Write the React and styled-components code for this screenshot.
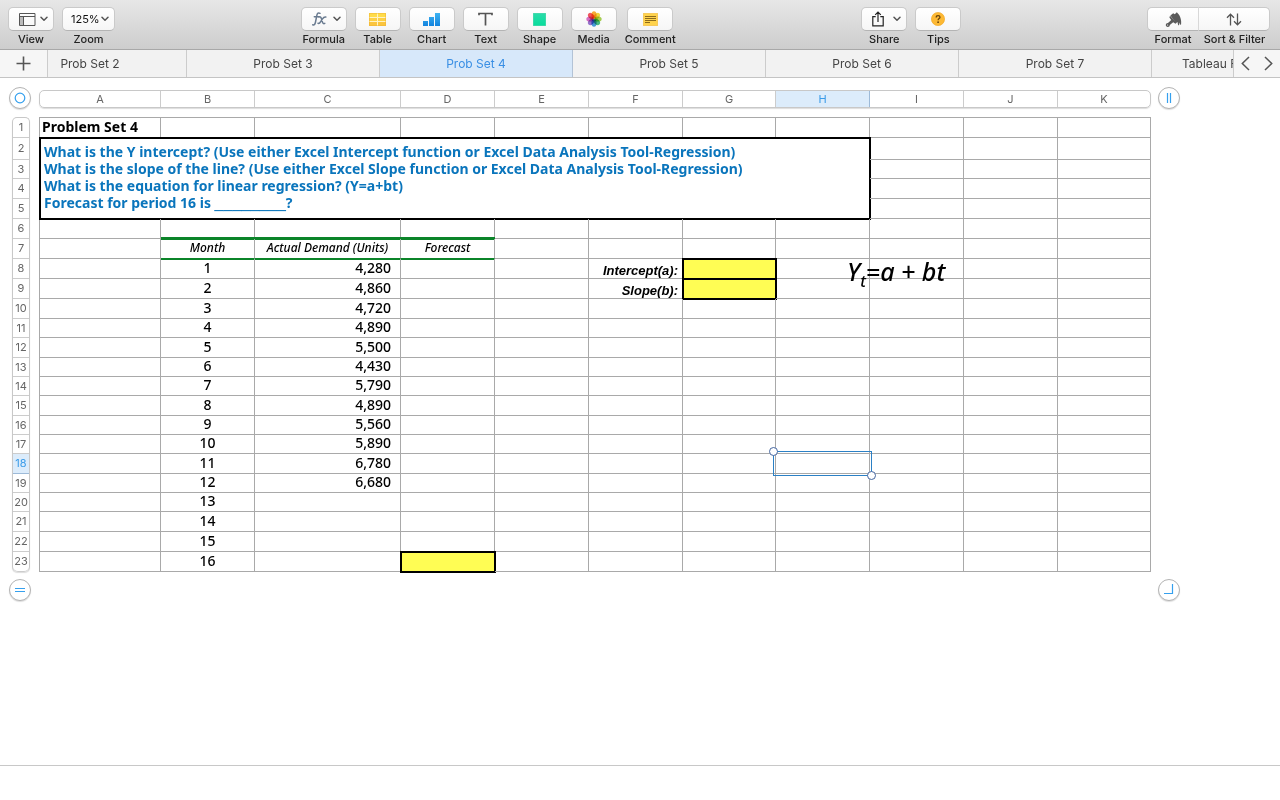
import React from 'react';
import styled, { createGlobalStyle, css } from 'styled-components';

const columns = [
    { name: 'A', width: 121 },
    { name: 'B', width: 94 },
    { name: 'C', width: 146 },
    { name: 'D', width: 94 },
    { name: 'E', width: 94 },
    { name: 'F', width: 94 },
    { name: 'G', width: 93 },
    { name: 'H', width: 94 },
    { name: 'I', width: 94 },
    { name: 'J', width: 94 },
    { name: 'K', width: 93 },
];

const rowHeights = [20, 22, 19, 20, 20, 20, 20, 20, 20, 20, 19, 20, 19, 19, 20, 19, 19, 20, 19, 19, 20, 20, 20];

const demand = ['4,280', '4,860', '4,720', '4,890', '5,500', '4,430', '5,790', '4,890', '5,560', '5,890', '6,780', '6,680'];

const tabs = ['Prob Set 2', 'Prob Set 3', 'Prob Set 4', 'Prob Set 5', 'Prob Set 6', 'Prob Set 7'];

const FIRST_MONTH_ROW = 8;

const cellProps = {
    A1: { $kind: 'title', text: 'Problem Set 4' },
    B7: { $kind: 'heading', text: 'Month' },
    C7: { $kind: 'heading', text: 'Actual Demand (Units)' },
    D7: { $kind: 'heading', text: 'Forecast' },
    F8: { $kind: 'label', text: 'Intercept(a):' },
    F9: { $kind: 'label', text: 'Slope(b):' },
    G8: { $kind: 'answer' },
    G9: { $kind: 'answer' },
    D23: { $kind: 'answer' },
};

const getCell = (column, row) => {
    const month = row - FIRST_MONTH_ROW + 1;
    if (column === 'B' && month > 0)
        return { $kind: 'month', text: month };
    if (column === 'C' && month > 0)
        return { $kind: 'number', text: demand[month - 1] };
    return cellProps[column + row] || {};
};

const Chevron = () => (
    <svg width="8" height="6" viewBox="0 0 8 6" fill="none" stroke="#555" strokeWidth="1.5" strokeLinecap="round" strokeLinejoin="round">
        <path d="M1 1.2l3 3 3-3" />
    </svg>
);

const ViewIcon = () => (
    <svg width="17" height="13" viewBox="0 0 17 13" fill="none" stroke="#555">
        <rect x="1" y="4" width="3.5" height="8.5" fill="#bbb" stroke="none" />
        <path d="M.5.5h15.500v12H.5zM.5 3.500h15.500M4.500 3.500v9" />
    </svg>
);

const FormulaIcon = () => (
    <svg width="15" height="14" viewBox="0 0 15 14" fill="none" stroke="#6a7b90" strokeWidth="1.500" strokeLinecap="round">
        <path d="M8 1.300C6.300.400 5.300 1.300 4.900 3.200L3.400 10.500C3 12.600 2 13.300.700 12.700M2.300 4.800h4.500" />
        <path d="M7 5c1.400-.6 2 .2 2.400 1.600l1 3.300c.4 1.500 1.200 2.100 2.400 1.500M13.800 5c-1.500-.3-2.500.6-3.500 2.100L8.700 9.600C7.900 11 7.200 11.700 6 11.300" />
    </svg>
);

const TableIcon = () => (
    <svg width="17" height="13" viewBox="0 0 17 13">
        <path fill="#ffdc4a" d="M0 0h17v4.500H0z" />
        <path fill="#fdd045" d="M0 4.500h17v4H0z" />
        <path fill="#fbc53e" d="M0 8.500h17V13H0z" />
        <path fill="none" stroke="#fff3c4" d="M0 4.500h17M0 8.500h17M8.500 0v13" />
        <path fill="none" stroke="#efb432" strokeWidth=".6" d="M.3.3h16.400v12.400H.3z" />
    </svg>
);

const ChartIcon = () => (
    <svg width="17" height="13" viewBox="0 0 17 13">
        <defs>
            <linearGradient id="bars" x1="0" y1="0" x2="0" y2="13" gradientUnits="userSpaceOnUse">
                <stop offset="0" stopColor="#3fb4f2" />
                <stop offset="1" stopColor="#1283de" />
            </linearGradient>
        </defs>
        <path fill="url(#bars)" d="M0 8h5v5H0zM6 4h5v9H6zM12 0h5v13h-5z" />
    </svg>
);

const TextIcon = () => (
    <svg width="15" height="14" viewBox="0 0 15 14" fill="none" stroke="#555" strokeWidth="1.700">
        <path d="M1 3.200V1.500h13v1.700M7.500 1.500v12" />
    </svg>
);

const ShapeIcon = () => (
    <svg width="13" height="13" viewBox="0 0 13 13">
        <defs>
            <linearGradient id="shape" x1="0" y1="0" x2="0" y2="1">
                <stop offset="0" stopColor="#2bdcaa" />
                <stop offset="1" stopColor="#08dd9c" />
            </linearGradient>
        </defs>
        <path fill="url(#shape)" stroke="#1ccb95" strokeWidth=".6" d="M.3.3h12.400v12.400H.3z" />
    </svg>
);

const petals = ['#f8a01c', '#f0d326', '#9ccb3b', '#2fb573', '#2c8fd6', '#8b62c9', '#d55ec0', '#f1404b'];

const MediaIcon = () => (
    <svg width="16" height="16" viewBox="0 0 16 16">
        {petals.map((color, index) => (
            <Petal key={color} cx="8" cy="4" rx="2.600" ry="3.700" fill={color} opacity=".88" transform={`rotate(${index * 45} 8 8)`} />
        ))}
    </svg>
);

const CommentIcon = () => (
    <svg width="15" height="13" viewBox="0 0 15 13">
        <path fill="#ffd34c" stroke="#efb432" strokeWidth=".6" d="M.3.3h14.400v12.400H.3z" />
        <path stroke="#8c6a1c" d="M2 3.500h11M2 5.500h11M2 7.500h11M2 9.500h5" />
    </svg>
);

const ShareIcon = () => (
    <svg width="12" height="16" viewBox="0 0 12 16" fill="none" stroke="#222" strokeWidth="1.200">
        <path d="M3.700 5.600H.8v9.300h10.400V5.600H8.300M6 11V1.200M3.200 3.800L6 1l2.800 2.800" />
    </svg>
);

const TipsIcon = () => (
    <svg width="14" height="14" viewBox="0 0 14 14">
        <circle cx="7" cy="7" r="6.600" fill="#fdb934" stroke="#f0a51f" strokeWidth=".6" />
        <path d="M5.200 5.500c0-1.100.8-1.800 1.900-1.800s1.900.6 1.900 1.600c0 1.300-1.900 1.300-1.900 2.900" fill="none" stroke="#66430b" strokeWidth="1.300" />
        <circle cx="7.100" cy="10.200" r=".9" fill="#66430b" />
    </svg>
);

const FormatIcon = () => (
    <svg width="17" height="15" viewBox="0 0 17 15" fill="#5a5a5a">
        <path d="M5.400 3.600L8.200 1.300l1.600.9L11.800.200l2 2.200c1.100 1.600 2 3.900 2.300 6.400.1 1.500.1 2.800-.1 4.100-.9-.3-1-1.400-1.300-2.500-.3 1-.3 2.600-1.200 3-.8-.7-.5-2.300-1.100-3.500L11 11z" />
        <path d="M5 3.800l6.700 6.900-1.200 1-2.300-1.500-3.400 2.700c.1 1.200-.8 2-2 2-1.300 0-2-.9-2-1.900 0-1.200 1-2 2.200-1.900l3.200-3.200-1.800-2.500z" />
        <circle cx="2.600" cy="13" r=".6" fill="#fafafa" />
    </svg>
);

const SortIcon = () => (
    <svg width="16" height="13" viewBox="0 0 16 13" fill="none" stroke="#555" strokeWidth="1.300">
        <path d="M4.500 12.500V1.200M1 4.700l3.500-3.500L8 4.700M11.500.500v11.300M8 8.300l3.500 3.500L15 8.300" />
    </svg>
);

const insertTools = [
    { label: 'Formula', icon: <FormulaIcon />, menu: true },
    { label: 'Table', icon: <TableIcon /> },
    { label: 'Chart', icon: <ChartIcon /> },
    { label: 'Text', icon: <TextIcon /> },
    { label: 'Shape', icon: <ShapeIcon /> },
    { label: 'Media', icon: <MediaIcon /> },
    { label: 'Comment', icon: <CommentIcon /> },
];

const ToolButton = ({ label, icon, menu, width, side }) => (
    <Tool>
        <Button aria-label={label} $menu={menu} $width={width} $side={side}>
            {icon}
            {menu && <Chevron />}
        </Button>
        <ToolLabel>{label}</ToolLabel>
    </Tool>
);

const Cell = ({ column, row }) => {
    const { text, ...style } = getCell(column, row);
    return (
        <Td {...style}>
            {text}
            {column === 'H' && row === 8 && <Equation>Y<sub>t</sub>=a + bt</Equation>}
            {column === 'H' && row === 18 && <Selection />}
        </Td>
    );
};

const Sheet = () => (
    <Table>
        <colgroup>
            {columns.map(({ name, width }) => <Col key={name} $width={width} />)}
        </colgroup>
        <tbody>
            {rowHeights.map((height, index) => {
                const row = index + 1;
                const merged = row >= 2 && row <= 5;
                return (
                    <Tr key={row} $height={height}>
                        {row === 2 &&
                            <Td colSpan={8} rowSpan={4} $kind="question">
                                What is the Y intercept? (Use either Excel Intercept function or Excel Data Analysis Tool-Regression)<br />
                                What is the slope of the line? (Use either Excel Slope function or Excel Data Analysis Tool-Regression)<br />
                                What is the equation for linear regression? (Y=a+bt)<br />
                                Forecast for period 16 is <Blank>________</Blank>?
                            </Td>
                        }
                        {(merged ? columns.slice(8) : columns).map(({ name }) => <Cell key={name} column={name} row={row} />)}
                    </Tr>
                );
            })}
        </tbody>
    </Table>
);

const App = () => (
    <Page>
        <GlobalStyle />
        <Toolbar>
            <Group>
                <ToolButton label="View" icon={<ViewIcon />} menu />
                <Tool>
                    <ZoomBox>
                        <select id="zoom" defaultValue="125%">
                            <option>100%</option>
                            <option>125%</option>
                            <option>150%</option>
                        </select>
                        <Chevron />
                    </ZoomBox>
                    <ToolLabel as="label" htmlFor="zoom">Zoom</ToolLabel>
                </Tool>
            </Group>
            <Group>
                {insertTools.map((tool) => <ToolButton key={tool.label} {...tool} />)}
            </Group>
            <Group>
                <ToolButton label="Share" icon={<ShareIcon />} menu />
                <ToolButton label="Tips" icon={<TipsIcon />} />
            </Group>
            <Group $joined>
                <ToolButton label="Format" icon={<FormatIcon />} width={52} side="left" />
                <ToolButton label="Sort & Filter" icon={<SortIcon />} width={71} side="right" />
            </Group>
        </Toolbar>
        <TabBar>
            <AddButton aria-label="Add sheet">
                <svg width="15" height="15" viewBox="0 0 15 15" stroke="#555" strokeWidth="1.600"><path d="M7.500.500v14M.500 7.500h14" /></svg>
            </AddButton>
            <TabWindow>
                <TabTrack>
                    {tabs.map((tab) => <Tab key={tab} $active={tab === 'Prob Set 4'}>{tab}</Tab>)}
                    <Tab $start>Tableau F</Tab>
                </TabTrack>
            </TabWindow>
            <TabArrows>
                <button aria-label="Previous sheets">
                    <svg width="9" height="15" viewBox="0 0 9 15" fill="none" stroke="#555" strokeWidth="1.500"><path d="M8 1L1.300 7.500 8 14" /></svg>
                </button>
                <button aria-label="Next sheets">
                    <svg width="9" height="15" viewBox="0 0 9 15" fill="none" stroke="#555" strokeWidth="1.500"><path d="M1 1l6.700 6.500L1 14" /></svg>
                </button>
            </TabArrows>
        </TabBar>
        <Canvas>
            <Handle aria-label="Select table">
                <svg width="12" height="12" viewBox="0 0 12 12"><circle cx="6" cy="6" r="4.800" /></svg>
            </Handle>
            <ColumnHeads>
                {columns.map(({ name, width }) => <ColumnHead key={name} $width={width} $active={name === 'H'}>{name}</ColumnHead>)}
            </ColumnHeads>
            <Handle aria-label="Add column">
                <svg width="12" height="12" viewBox="0 0 12 12"><path d="M4.500 1v10M7.500 1v10" /></svg>
            </Handle>
            <RowHeads>
                {rowHeights.map((height, index) => <RowHead key={index} $height={height} $active={index === 17}>{index + 1}</RowHead>)}
            </RowHeads>
            <Sheet />
            <span />
            <Handle aria-label="Add row">
                <svg width="12" height="12" viewBox="0 0 12 12"><path d="M1 4.500h10M1 7.500h10" /></svg>
            </Handle>
            <span />
            <Handle aria-label="Add rows and columns">
                <svg width="12" height="12" viewBox="0 0 12 12"><path d="M1 9.500h8.500V0" /></svg>
            </Handle>
        </Canvas>
        <Footer />
    </Page>
);

export default App;

const uiFont = 'Inter, "Liberation Sans", sans-serif';
const sheetFont = '"Noto Sans", "Open Sans", sans-serif';

const GlobalStyle = createGlobalStyle`
    *{
        box-sizing:border-box;
    }
    body{
        margin:0;
        background:#fff;
        font-family:${uiFont};
    }
    button, select{
        font:inherit;
        margin:0;
        padding:0;
        border:0;
        background:none;
    }
    svg{
        display:block;
        flex:none;
    }
`;

const Page = styled.div`
    display:flex;
    flex-direction:column;
    min-height:100vh;
`;

const Toolbar = styled.header`
    display:flex;
    justify-content:space-between;
    height:50px;
    padding:7px 10px 0 8px;
    background:linear-gradient(#e7e7e7, #cdcdcd);
    border-bottom:1px solid #a8a8a8;
`;

const Group = styled.div`
    display:flex;
    gap:${({ $joined }) => $joined ? 0 : 8}px;
`;

const Tool = styled.div`
    display:flex;
    flex-direction:column;
    align-items:center;
    gap:1px;
`;

const Petal = styled.ellipse`
    mix-blend-mode:multiply;
`;

const buttonLook = css`
    height:24px;
    background:linear-gradient(#fff, #f6f6f6);
    border:1px solid #cacaca;
    border-bottom-color:#b4b4b4;
    border-radius:5px;
`;

const Button = styled.button`
    ${buttonLook}
    display:flex;
    align-items:center;
    justify-content:${({ $menu }) => $menu ? 'space-between' : 'center'};
    width:${({ $width }) => $width || 46}px;
    padding:${({ $menu }) => $menu ? '0 5px 0 10px' : 0};
    ${({ $side }) => $side === 'left' && css`
        border-right-color:#d8d8d8;
        border-radius:5px 0 0 5px;
    `}
    ${({ $side }) => $side === 'right' && css`
        border-left:0;
        border-radius:0 5px 5px 0;
    `}
`;

const ToolLabel = styled.span`
    font-size:11px;
    line-height:14px;
    font-weight:500;
    color:#222;
    white-space:nowrap;
`;

const ZoomBox = styled.div`
    ${buttonLook}
    display:grid;
    grid-template-columns:1fr 8px;
    align-items:center;
    width:53px;
    padding:0 5px 0 8px;
    select{
        grid-area:1 / 1 / 2 / 3;
        height:22px;
        appearance:none;
        outline:0;
        font-size:11px;
        color:#111;
    }
    svg{
        grid-area:1 / 2;
        pointer-events:none;
    }
`;

const TabBar = styled.nav`
    display:flex;
    height:28px;
    background:#f2f2f2;
    border-bottom:1px solid #c4c4c4;
`;

const AddButton = styled.button`
    display:flex;
    align-items:center;
    justify-content:center;
    flex:none;
    width:48px;
    background:#f6f6f6;
    border-right:1px solid #ccc;
`;

const TabWindow = styled.div`
    flex:1;
    min-width:0;
    overflow:hidden;
`;

/* the strip is scrolled a little, so its first tab is cut off */
const TabTrack = styled.div`
    display:flex;
    height:100%;
    margin-left:-54px;
`;

const Tab = styled.button`
    flex:none;
    width:193px;
    padding-left:${({ $start }) => $start ? 30 : 0}px;
    border-right:1px solid ${({ $active }) => $active ? '#b3c3d6' : '#ccc'};
    background:${({ $active }) => $active ? '#d7e8fa' : 'none'};
    color:${({ $active }) => $active ? '#3a8fe4' : '#444'};
    font-size:12px;
    text-align:${({ $start }) => $start ? 'left' : 'center'};
`;

const TabArrows = styled.div`
    display:flex;
    flex:none;
    align-items:center;
    justify-content:space-between;
    width:47px;
    padding:0 7px;
    background:#f6f6f6;
    border-left:1px solid #ccc;
`;

const Canvas = styled.main`
    display:grid;
    flex:1;
    grid-template-columns:23px auto 22px;
    grid-template-rows:23px auto 22px;
    align-content:start;
    justify-content:start;
    gap:7px;
    padding:9px;
`;

const Handle = styled.button`
    display:flex;
    align-items:center;
    justify-content:center;
    width:22px;
    height:22px;
    background:#fff;
    border:1px solid #b4b4b4;
    border-radius:50%;
    box-shadow:0 1px 1px #ddd;
    svg{
        fill:none;
        stroke:#35a0ee;
        stroke-width:1.2;
    }
`;

const ColumnHeads = styled.div`
    display:flex;
    height:18px;
    margin-top:3px;
    border:1px solid #c8c8c8;
    border-radius:5px;
    box-shadow:0 1px 1px #ddd;
`;

const headLook = css`
    display:flex;
    align-items:center;
    justify-content:center;
    color:${({ $active }) => $active ? '#3a9be8' : '#666'};
    background:${({ $active }) => $active ? '#dcecfb' : 'none'};
    font-size:11px;
    line-height:16px;
`;

const ColumnHead = styled.div`
    ${headLook}
    flex:none;
    width:${({ $width }) => $width}px;
    border-right:1px solid ${({ $active }) => $active ? '#9dbad8' : '#ccc'};
    &:last-child{
        flex:1;
        width:auto;
        border-right:0;
    }
`;

const RowHeads = styled.div`
    justify-self:end;
    width:18px;
    margin-right:2px;
    border:1px solid #c8c8c8;
    border-bottom-width:0;
    border-radius:5px;
    box-shadow:0 1px 1px #ddd;
`;

const RowHead = styled.div`
    ${headLook}
    height:${({ $height }) => $height}px;
    padding-bottom:1px;
    border-bottom:1px solid ${({ $active }) => $active ? '#9dbad8' : '#ccc'};
    &:last-child{
        border-radius:0 0 5px 5px;
    }
`;

const Table = styled.table`
    table-layout:fixed;
    width:1112px;
    border-collapse:separate;
    border-spacing:0;
    border:solid #a9a9a9;
    border-width:1px 0 0 1px;
    font-family:${sheetFont};
    font-size:14px;
    font-weight:500;
    color:#000;
`;

const Col = styled.col`
    width:${({ $width }) => $width}px;
`;

const Tr = styled.tr`
    height:${({ $height }) => $height}px;
`;

const kinds = {
    title: css`
        padding-left:2px;
        font-weight:bold;
    `,
    question: css`
        padding-left:4px;
        color:#0a75bc;
        font-weight:bold;
        line-height:17px;
        outline:2px solid #000;
        outline-offset:-1px;
    `,
    heading: css`
        border-bottom-color:#0b8429;
        box-shadow:0 -2px #0b8429, inset 0 1px #0b8429, 0 1px #0b8429;
        font-size:12px;
        font-style:italic;
        text-align:center;
    `,
    month: css`
        text-align:center;
    `,
    number: css`
        padding-right:9px;
        text-align:right;
    `,
    label: css`
        padding:0 4px 0 0;
        vertical-align:bottom;
        font-family:"Liberation Sans", Arial, sans-serif;
        font-size:13px;
        font-weight:bold;
        font-style:italic;
        line-height:14px;
        text-align:right;
    `,
    answer: css`
        background:#fffd54;
        outline:2px solid #000;
        outline-offset:-1px;
    `,
};

const Td = styled.td`
    position:relative;
    padding:0 0 2px;
    border:solid #a9a9a9;
    border-width:0 1px 1px 0;
    line-height:16px;
    white-space:nowrap;
    ${({ $kind }) => kinds[$kind]}
`;

const Blank = styled.span`
    font-family:"Liberation Sans", Arial, sans-serif;
    font-size:16px;
    font-weight:normal;
`;

const Equation = styled.div`
    position:absolute;
    z-index:1;
    left:71px;
    top:-4px;
    font-size:25px;
    font-weight:500;
    font-style:italic;
    line-height:32px;
    sub{
        font-size:16px;
        line-height:0;
    }
`;

const Selection = styled.div`
    position:absolute;
    z-index:1;
    inset:-3px;
    border:1px solid #2b80c5;
    &::before, &::after{
        content:'';
        position:absolute;
        width:7px;
        height:7px;
        background:#fff;
        border:1px solid #4566a0;
        border-radius:50%;
    }
    &::before{
        left:-5px;
        top:-5px;
    }
    &::after{
        right:-5px;
        bottom:-5px;
    }
`;

const Footer = styled.footer`
    height:35px;
    border-top:1px solid #c8c8c8;
`;
